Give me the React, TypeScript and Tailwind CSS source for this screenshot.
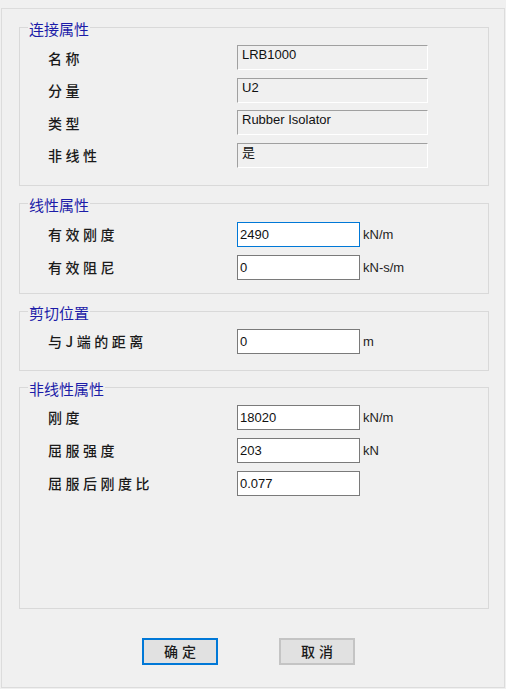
import React from "react";

const CJK = "font-['Noto_Sans_CJK_SC',sans-serif]";
const LAT = "font-['Liberation_Sans','Noto_Sans_CJK_SC',sans-serif]";

function Group({
  title,
  className,
  children,
}: {
  title: string;
  className: string;
  children: React.ReactNode;
}) {
  return (
    <div className={`relative w-[470px] border border-[#d9d9d9] pl-[28px] flex flex-col ${className}`}>
      <span
        className={`absolute left-[8px] -top-[8px] px-px bg-[#f0f0f0] text-[15px] leading-[18px] text-[#1c1ca8] ${CJK}`}
      >
        {title}
      </span>
      {children}
    </div>
  );
}

function Row({ label, children }: { label: string; children: React.ReactNode }) {
  return (
    <div className="flex items-center h-[25px]">
      <div className={`w-[189px] text-[14px] leading-[20px] tracking-[3.5px] font-medium text-[#1a1a1a] ${CJK}`}>{label}</div>
      {children}
    </div>
  );
}

function ReadOnly({ value }: { value: string }) {
  return (
    <div
      className={`w-[191px] h-[25px] bg-[#f0f0f0] border border-t-[#a0a0a0] border-l-[#a0a0a0] border-r-[#ffffff] border-b-[#ffffff] pl-[4px] pt-[1px] text-[13px] leading-[15px] text-[#111] ${LAT}`}
    >
      {value}
    </div>
  );
}

function Field({ value, unit, focused }: { value: string; unit?: string; focused?: boolean }) {
  return (
    <>
      <div
        className={`w-[123px] h-[25px] bg-white border ${
          focused ? "border-[#0078d7]" : "border-[#7a7a7a]"
        } pl-[2px] flex items-center text-[13px] leading-[15px] text-[#111] ${LAT}`}
      >
        {value}
      </div>
      {unit && <span className={`ml-[3px] text-[13px] leading-[15px] text-[#1e1e1e] ${LAT}`}>{unit}</span>}
    </>
  );
}

export default function App() {
  return (
    <div className="w-[506px] h-[689px] bg-[#f0f0f0] pt-[8px] pl-[1px] overflow-hidden">
      <div className="w-[504px] h-[680px] border border-[#dcdcdc] pt-[18px] pl-[17px] flex flex-col">
        <Group title="连接属性" className="pt-[17px] pb-[17px] gap-[7.67px]">
          <Row label="名称">
            <ReadOnly value="LRB1000" />
          </Row>
          <Row label="分量">
            <ReadOnly value="U2" />
          </Row>
          <Row label="类型">
            <ReadOnly value="Rubber Isolator" />
          </Row>
          <Row label="非线性">
            <ReadOnly value="是" />
          </Row>
        </Group>

        <Group title="线性属性" className="mt-[17px] pt-[18px] pb-[13px] gap-[8px]">
          <Row label="有效刚度">
            <Field value="2490" unit="kN/m" focused />
          </Row>
          <Row label="有效阻尼">
            <Field value="0" unit="kN-s/m" />
          </Row>
        </Group>

        <Group title="剪切位置" className="mt-[17px] pt-[17px] pb-[16px]">
          <Row label="与J端的距离">
            <Field value="0" unit="m" />
          </Row>
        </Group>

        <Group title="非线性属性" className="mt-[16px] h-[222px] pt-[17px] gap-[8px]">
          <Row label="刚度">
            <Field value="18020" unit="kN/m" />
          </Row>
          <Row label="屈服强度">
            <Field value="203" unit="kN" />
          </Row>
          <Row label="屈服后刚度比">
            <Field value="0.077" />
          </Row>
        </Group>

        <div className="mt-[29px] ml-[123px] flex gap-[61px]">
          <button
            className={`w-[76px] h-[27px] bg-[#e1e1e1] border-2 border-[#0078d7] text-[14px] leading-[18px] tracking-[4px] pl-[4px] font-medium text-[#1a1a1a] ${CJK}`}
          >
            确定
          </button>
          <button
            className={`w-[76px] h-[27px] bg-[#e1e1e1] border-2 border-[#c4c4c4] text-[14px] leading-[18px] tracking-[4px] pl-[4px] font-medium text-[#1a1a1a] ${CJK}`}
          >
            取消
          </button>
        </div>
      </div>
    </div>
  );
}
